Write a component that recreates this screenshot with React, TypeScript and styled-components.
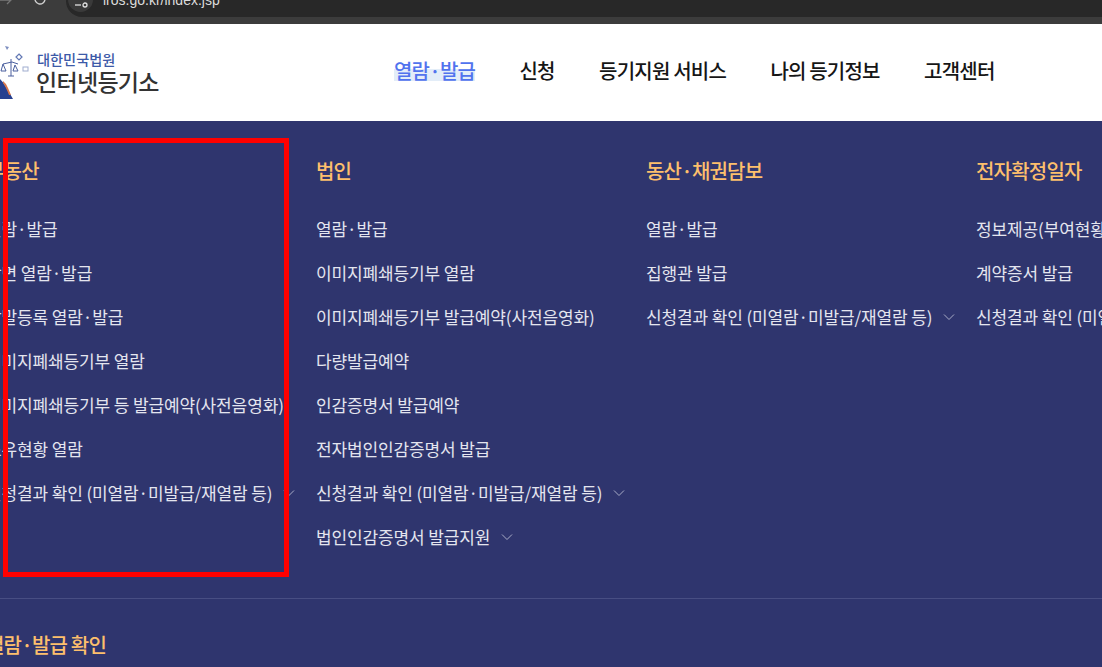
import React from "react";
import styled, { createGlobalStyle } from "styled-components";

const Global = createGlobalStyle`
  html, body { margin: 0; padding: 0; width: 1102px; height: 667px; overflow: hidden; background: #2f356e; }
  #root { width: 1102px; height: 667px; overflow: hidden; }
  * { box-sizing: border-box; }
`;
const Page = styled.div`
  position: relative; width: 1102px; height: 667px; overflow: hidden;
  font-family: "Noto Sans CJK KR", "Noto Sans", sans-serif;
  display: flex; flex-direction: column; background: #2f356e;
`;
const Chrome = styled.div`
  height: 24px; flex: none; background: #3c3c3c; display: flex; align-items: flex-start; overflow: hidden;
`;
const BackArrow = styled.svg` width: 14px; height: 14px; margin: -7px 0 0 0; flex: none; `;
const Reload = styled.svg` width: 16px; height: 16px; margin: -9px 18px 0 18px; flex: none; `;
const Address = styled.div`
  flex: 1; height: 17px; background: #282828; border-radius: 0 0 0 16px; display: flex; align-items: flex-start; padding-left: 2px;
  color: #dcdcdc; font: 14px/17px "Liberation Sans", sans-serif; gap: 10px;
`;
const SiteBadge = styled.div`
  width: 25px; height: 25px; margin-top: -13px; flex: none; border-radius: 50%; background: #3a3a3a;
  display: flex; align-items: flex-end; justify-content: center; padding-bottom: 4px;
`;
const SiteIcon = styled.svg` width: 14px; height: 6px; flex: none; `;
const Url = styled.span` position: relative; top: -8px; `;
const Header = styled.header`
  height: 97px; flex: none; background: #fff; display: flex; align-items: center;
`;
const Logo = styled.div` width: 394px; flex: none; display: flex; align-items: center; height: 100%; `;
const LogoMark = styled.svg` width: 36px; height: 60px; flex: none; margin-top: 4px; `;
const LogoText = styled.div` display: flex; flex-direction: column; margin-top: 3px; `;
const Court = styled.span` font-size: 14.2px; line-height: 15px; font-weight: 500; color: #3d5aa8; padding-left: 1px; `;
const Registry = styled.span` font-size: 23px; line-height: 29px; font-weight: 500; color: #333; letter-spacing: -0.7px; `;
const Nav = styled.nav` display: flex; gap: 44.4px; margin-top: -4px; `;
const NavItem = styled.a<{ $active?: boolean }>`
  font-size: 20px; line-height: 26px; font-weight: 500; letter-spacing: -0.8px;
  color: ${p => (p.$active ? "#5173ee" : "#161616")};
  background: ${p => (p.$active ? "linear-gradient(transparent 42%, #e3edf8 42%, #e3edf8 88%, transparent 88%)" : "none")};
`;
const Menu = styled.main` flex: 1; margin-left: -14px; display: flex; flex-direction: column; `;
const Columns = styled.div` display: flex; height: 478px; padding-top: 37px; border-bottom: 1px solid #484e83; `;
const Column = styled.section` width: 330px; flex: none; white-space: nowrap; `;
const Title = styled.h2`
  margin: 0 0 32px; font-size: 20px; line-height: 26px; font-weight: 500; color: #fdbf6c; letter-spacing: -0.8px;
`;
const List = styled.ul` list-style: none; margin: 0; padding: 0; display: flex; flex-direction: column; gap: 18px; `;
const Item = styled.li`
  height: 26px; display: flex; align-items: center; gap: 10px;
  font-size: 17px; line-height: 26px; color: #e4e5ef; letter-spacing: -0.13px;
`;
const Chevron = styled.svg` width: 12px; height: 12px; flex: none; margin-left: 1px; `;
const Bottom = styled.div` padding-top: 33px; `;
const Highlight = styled.div`
  position: absolute; left: 3px; top: 138px; width: 286px; height: 439px; border: 5px solid #ff0000;
`;

const Arrow = () => (
  <Chevron viewBox="0 0 12 12" fill="none" stroke="#a9acc6" strokeWidth="1">
    <path d="M1 3.5 L6 8.5 L11 3.5" />
  </Chevron>
);
const columns = [
  { title: "부동산", items: ["열람·발급", "당면 열람·발급", "말말등록 열람·발급", "이미지폐쇄등기부 열람", "이미지폐쇄등기부 등 발급예약(사전음영화)", "소유현황 열람", "신청결과 확인 (미열람·미발급/재열람 등)+"] },
  { title: "법인", items: ["열람·발급", "이미지폐쇄등기부 열람", "이미지폐쇄등기부 발급예약(사전음영화)", "다량발급예약", "인감증명서 발급예약", "전자법인인감증명서 발급", "신청결과 확인 (미열람·미발급/재열람 등)+", "법인인감증명서 발급지원+"] },
  { title: "동산·채권담보", items: ["열람·발급", "집행관 발급", "신청결과 확인 (미열람·미발급/재열람 등)+"] },
  { title: "전자확정일자", items: ["정보제공(부여현황)", "계약증서 발급", "신청결과 확인 (미열람·미발급/재열람 등)+"] },
];

export default function App() {
  return (
    <Page>
      <Global />
      <Chrome>
        <BackArrow viewBox="0 0 14 14" fill="none" stroke="#777" strokeWidth="1.3">
          <path d="M0 7h11M7 3l4 4-4 4" />
        </BackArrow>
        <Reload viewBox="0 0 16 16" fill="none" stroke="#d0d0d0" strokeWidth="1.4">
          <path d="M13 8a5 5 0 1 1-1.6-3.7M13 2v3h-3" />
        </Reload>
        <Address>
          <SiteBadge>
            <SiteIcon viewBox="0 0 14 6" fill="none" stroke="#e0e0e0" strokeWidth="1.3">
              <path d="M1 3h6" />
              <circle cx="11" cy="3" r="2" />
            </SiteIcon>
          </SiteBadge>
          <Url>iros.go.kr/index.jsp</Url>
        </Address>
      </Chrome>
      <Header>
        <Logo>
          <LogoMark viewBox="0 0 36 60">
            <path d="M0 34 Q4 38 6 42 L13 54 H0 Z" fill="#27408f" />
            <path d="M3 36 Q6 38 8 43 L11 50 L9 50 Q6 42 3 38 Z" fill="#d8774a" />
            <path d="M3 19 L12 17 L18 19 M11 14 V31 M8 31 H14 M3 19 l-2 7 h5 z M15 20 l-2 6 h5 z" stroke="#4a5f9e" strokeWidth="1" fill="none" />
            <path d="M5 1 l4 1 -2 3 z" fill="#7e8fc0" />
            <path d="M19 9 l3 3 -3 3 -3 -3 z" fill="none" stroke="#6278b4" strokeWidth="1.2" />
            <rect x="23" y="22" width="5" height="4" fill="none" stroke="#a0adcf" strokeWidth="1" />
          </LogoMark>
          <LogoText>
            <Court>대한민국법원</Court>
            <Registry>인터넷등기소</Registry>
          </LogoText>
        </Logo>
        <Nav>
          <NavItem $active>열람·발급</NavItem>
          <NavItem>신청</NavItem>
          <NavItem>등기지원 서비스</NavItem>
          <NavItem>나의 등기정보</NavItem>
          <NavItem>고객센터</NavItem>
        </Nav>
      </Header>
      <Menu>
        <Columns>
          {columns.map(c => (
            <Column key={c.title}>
              <Title>{c.title}</Title>
              <List>
                {c.items.map(i => (
                  <Item key={i}>
                    <span>{i.replace("+", "")}</span>
                    {i.endsWith("+") && <Arrow />}
                  </Item>
                ))}
              </List>
            </Column>
          ))}
        </Columns>
        <Bottom>
          <Title>열람·발급 확인</Title>
        </Bottom>
      </Menu>
      <Highlight />
    </Page>
  );
}
